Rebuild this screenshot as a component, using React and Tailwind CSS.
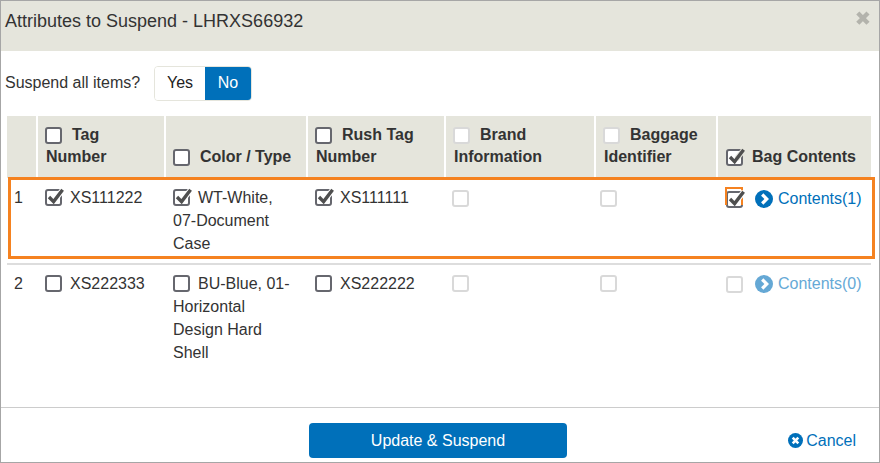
import React from 'react';

function Check({ checked, disabled, className = '', halo = 'text-white' }) {
  return (
    <span className={`relative inline-block w-[17px] h-[17px] shrink-0 rounded-[3px] border-2 bg-white align-[-3px] ${disabled ? 'border-[#d9d9d9]' : 'border-[#66676e]'} ${className}`}>
      {checked && (
        <svg viewBox="0 0 17 17" className={`absolute z-10 left-[-2px] top-[-2px] w-[17px] h-[17px] overflow-visible ${halo}`}>
          <path d="M10.5 10 L18 0.5" fill="none" stroke="currentColor" strokeWidth="5.5" />
          <path d="M4 8 L8.6 12.6 L17.6 0.8" fill="none" stroke="#4f4f4f" strokeWidth="3.4" />
        </svg>
      )}
    </span>
  );
}

function HeaderCell({ label, second, checked, disabled, className = 'pl-[8px]', labelClass = 'ml-[10px]' }) {
  return (
    <div className={`bg-[#e5e5dc] pr-1 pb-[10px] flex flex-col justify-end font-bold text-[#333] leading-[22px] ${className}`}>
      <div className="flex items-center whitespace-nowrap">
        <Check checked={checked} disabled={disabled} halo="text-[#e5e5dc]" className="ml-[-1px] bg-transparent" />
        <span className={labelClass}>{label}</span>
      </div>
      {second && <div>{second}</div>}
    </div>
  );
}

function Arrow({ faded }) {
  return (
    <svg viewBox="0 0 20 20" className={`w-[18px] h-[18px] shrink-0 ${faded ? 'opacity-60' : ''}`}>
      <circle cx="10" cy="10" r="10" fill="#0070ba" />
      <path d="M8 5 L13 10 L8 15" fill="none" stroke="#fff" strokeWidth="3.6" />
    </svg>
  );
}

function Row({ num, tag, color, rush, contents, checked }) {
  return (
    <div className={`grid grid-cols-[31px_128px_142px_138px_150px_122px_153px] text-[#333] leading-[23px] h-[85px] ${checked ? 'pt-[8px]' : 'pt-[7px]'}`}>
      <div className="pl-[7px]">{num}</div>
      <div className="pl-[7px] flex items-start gap-[8px]">
        <Check checked={checked} className="mt-[3px]" />
        <span>{tag}</span>
      </div>
      <div className="pl-[7px] pr-[14px]">
        <Check checked={checked} className="mr-[8px]" />
        {color}
      </div>
      <div className="pl-[7px] flex items-start gap-[8px]">
        <Check checked={checked} className="mt-[3px]" />
        <span>{rush}</span>
      </div>
      <div className={`pl-[6px] ${checked ? 'pt-[1px]' : 'pt-0'}`}><Check disabled /></div>
      <div className={`pl-[4px] ${checked ? 'pt-[1px]' : 'pt-0'}`}><Check disabled /></div>
      <div className="pl-[8px] flex items-start whitespace-nowrap">
        <span className={`relative h-[17px] ${checked ? 'mt-[2px]' : 'mt-[1px]'}`}>
          <Check checked={checked} disabled={!checked} />
          {checked && <span className="absolute left-[-1px] top-[-1px] w-[18px] h-[18px] border-2 border-b-0 border-[#f58220]" />}
        </span>
        <span className={`ml-[12px] flex items-center gap-[5px] ${checked ? 'mt-[1px] text-[#0070ba]' : 'text-[#66a9d6]'}`}>
          <Arrow faded={!checked} />
          {contents}
        </span>
      </div>
    </div>
  );
}

export default function App() {
  return (
    <div className="w-[880px] h-[463px] bg-white border border-[#a6a6a6] flex flex-col text-[16px] font-['Liberation_Sans',Arial,sans-serif] text-[#333]">
      <div className="h-[50px] shrink-0 bg-[#e5e5dc] flex justify-between pl-[4px] pr-[8px] pt-[9px]">
        <div className="text-[18px] leading-[22px] text-[#333]">Attributes to Suspend - LHRXS66932</div>
        <svg viewBox="0 0 16 16" className="w-[16px] h-[16px]">
          <path d="M2.8 3 L13 13.2 M13 3 L2.8 13.2" stroke="#b3b3ac" strokeWidth="4.4" />
        </svg>
      </div>

      <div className="flex-1 pl-[6px] pr-[7px] relative">
        <div className="flex items-center h-[65px]">
          <span className="ml-[-2px] w-[149px] pb-[2px]">Suspend all items?</span>
          <div className="flex h-[35px] rounded-[4px] border border-[#e5e5dc] overflow-hidden">
            <div className="w-[50px] flex items-center justify-center bg-white text-[#222] pb-[2px]">Yes</div>
            <div className="w-[46px] flex items-center justify-center bg-[#0070ba] text-white pb-[2px]">No</div>
          </div>
        </div>

        <div className="grid grid-cols-[29px_126px_140px_136px_148px_120px_153px] gap-x-[2px] h-[62px] w-[864px]">
          <div className="bg-[#e5e5dc]" />
          <HeaderCell label="Tag" second="Number" />
          <HeaderCell label="Color / Type" />
          <HeaderCell label="Rush Tag" second="Number" />
          <HeaderCell label="Brand" second="Information" disabled />
          <HeaderCell label="Baggage" second="Identifier" disabled />
          <HeaderCell label="Bag Contents" checked className="pl-[9px]" labelClass="ml-[9px]" />
        </div>

        <div className="w-[864px] border-b-[2px] border-[#dddddd]">
          <Row num="1" tag="XS111222" color="WT-White, 07-Document Case" rush="XS111111" contents="Contents(1)" checked />
        </div>
        <div className="w-[864px]">
          <Row num="2" tag="XS222333" color="BU-Blue, 01-Horizontal Design Hard Shell" rush="XS222222" contents="Contents(0)" />
        </div>

        <div className="absolute left-[7px] top-[126px] w-[867px] h-[82px] border-[3px] border-[#f58220] pointer-events-none" />
      </div>

      <div className="h-[55px] shrink-0 border-t border-[#cccccc] grid grid-cols-[308px_258px_1fr] pt-[15px]">
        <div />
        <button className="h-[35px] bg-[#0070ba] rounded-[4px] text-white text-[16px]">Update &amp; Suspend</button>
        <div className="flex items-center justify-end pr-[23px] h-[35px] text-[#0070ba] gap-[3px]">
          <svg viewBox="0 0 16 16" className="w-[15px] h-[15px]">
            <circle cx="8" cy="8" r="8" fill="#0070ba" />
            <path d="M5 5 L11 11 M11 5 L5 11" stroke="#fff" strokeWidth="2.8" />
          </svg>
          Cancel
        </div>
      </div>
    </div>
  );
}
